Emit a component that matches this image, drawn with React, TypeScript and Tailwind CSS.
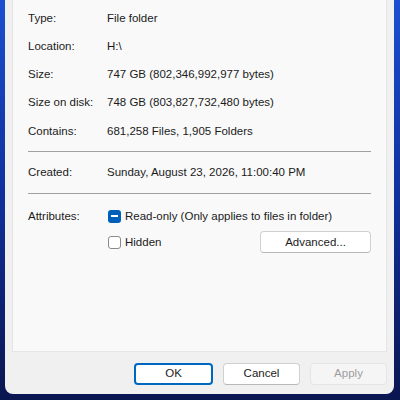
import React from 'react';

// Folder properties – General tab, lower half
const details = [
  { label: 'Type:', value: 'File folder' },
  { label: 'Location:', value: 'H:\\' },
  { label: 'Size:', value: '747 GB (802,346,992,977 bytes)' },
  { label: 'Size on disk:', value: '748 GB (803,827,732,480 bytes)' },
  { label: 'Contains:', value: '681,258 Files, 1,905 Folders' },
];

const font = { fontFamily: '"Segoe UI", "Liberation Sans", Arial, sans-serif' };

const Row = ({ label, children }: { label: string; children: React.ReactNode }) => (
  <div className="flex items-center h-[28.25px]">
    <div className="w-[79px] shrink-0">{label}</div>
    <div className="flex-1">{children}</div>
  </div>
);

const App = () => {
  return (
    <div
      className="w-[400px] h-[400px] overflow-hidden bg-gradient-to-b from-[#1b4fd0] via-[#0f2f9a] to-[#0a1650] pl-[5px] pr-[6px] pb-[6px] flex"
      style={font}
    >
      <div className="flex-1 flex flex-col bg-[#f0f0f0] rounded-b-[8px] text-[11.5px] text-[#1b1b1b]">
        <div className="mx-[7px] h-[352px] bg-[#f9f9f9] border-x border-b border-[#e5e5e5] pl-[15px] pr-[15px] pt-[4px]">
          {details.map((d) => (
            <Row key={d.label} label={d.label}>
              {d.value}
            </Row>
          ))}
          <div className="h-px bg-[#a0a0a0] mt-[6px]" />
          <div className="h-[41px] flex items-center">
            <div className="w-[79px]">Created:</div>
            <div>Sunday, August 23, 2026, 11:00:40 PM</div>
          </div>
          <div className="h-px bg-[#a0a0a0]" />
          <div className="flex mt-[14px]">
            <div className="w-[80px] leading-[16px]">Attributes:</div>
            <div className="flex-1 flex flex-col">
              <div className="flex items-center gap-[4px] h-[16px]">
                <span className="w-[13px] h-[13px] rounded-[3px] bg-[#005fb8] flex items-center justify-center">
                  <span className="w-[7px] h-[2px] bg-white" />
                </span>
                <span>Read-only (Only applies to files in folder)</span>
              </div>
              <div className="flex items-center justify-between mt-[7px]">
                <div className="flex items-center gap-[4px]">
                  <span className="w-[13px] h-[13px] rounded-[3px] bg-white border border-[#8a8a8a]" />
                  <span>Hidden</span>
                </div>
                <button className="w-[111px] h-[22px] rounded-[4px] bg-white border border-[#d0d0d0] border-b-[#b8b8b8] text-[11.5px]">
                  Advanced...
                </button>
              </div>
            </div>
          </div>
        </div>
        <div className="flex justify-end gap-[10px] pr-[7px] mt-[11px]">
          <button className="w-[79px] h-[22px] rounded-[4px] bg-white border-2 border-[#0067c0] text-[11.5px]">
            OK
          </button>
          <button className="w-[77px] h-[22px] rounded-[4px] bg-white border border-[#d0d0d0] border-b-[#b8b8b8] text-[11.5px]">
            Cancel
          </button>
          <button className="w-[77px] h-[22px] rounded-[4px] bg-[#f5f5f5] border border-[#e5e5e5] text-[11.5px] text-[#9d9d9d]">
            Apply
          </button>
        </div>
      </div>
    </div>
  );
};

export default App;
